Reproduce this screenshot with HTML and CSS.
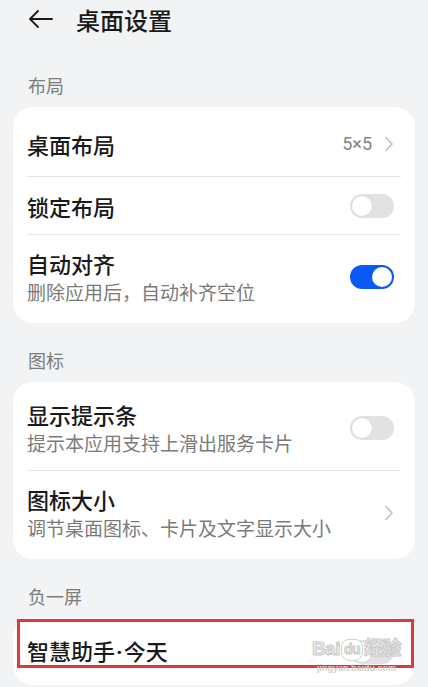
FILE: index.html
```html
<!DOCTYPE html>
<html lang="zh-CN">
<head>
<meta charset="utf-8">
<title>桌面设置</title>
<link rel="stylesheet" href="styles.css">
</head>
<body>
<div class="screen">
  <header class="header">
    <svg class="back" width="25" height="18" viewBox="0 0 25 18" aria-hidden="true">
      <path d="M10 1 L2 9 L10 17 M2 9 H24" fill="none" stroke="#1a1a1a" stroke-width="1.8" stroke-linecap="round" stroke-linejoin="round"/>
    </svg>
    <h1 class="title">桌面设置</h1>
  </header>

  <div class="section-label section-label--first">布局</div>
  <section class="card">
    <div class="row row--value">
      <div class="row-text"><div class="row-title">桌面布局</div></div>
      <div class="row-end">
        <span class="row-value">5×5</span>
        <svg class="chevron" width="10" height="16" viewBox="0 0 10 16" aria-hidden="true"><path d="M2 1.5 L8 8 L2 14.5" fill="none" stroke="#c4c4c4" stroke-width="1.8" stroke-linecap="round" stroke-linejoin="round"/></svg>
      </div>
    </div>
    <div class="row">
      <div class="row-text"><div class="row-title">锁定布局</div></div>
      <div class="row-end"><span class="toggle"><span class="knob"></span></span></div>
    </div>
    <div class="row row--double">
      <div class="row-text">
        <div class="row-title">自动对齐</div>
        <div class="row-sub">删除应用后，自动补齐空位</div>
      </div>
      <div class="row-end"><span class="toggle toggle--on"><span class="knob"></span></span></div>
    </div>
  </section>

  <div class="section-label">图标</div>
  <section class="card">
    <div class="row row--double">
      <div class="row-text">
        <div class="row-title">显示提示条</div>
        <div class="row-sub">提示本应用支持上滑出服务卡片</div>
      </div>
      <div class="row-end"><span class="toggle"><span class="knob"></span></span></div>
    </div>
    <div class="row row--double">
      <div class="row-text">
        <div class="row-title">图标大小</div>
        <div class="row-sub">调节桌面图标、卡片及文字显示大小</div>
      </div>
      <div class="row-end">
        <svg class="chevron" width="10" height="16" viewBox="0 0 10 16" aria-hidden="true"><path d="M2 1.5 L8 8 L2 14.5" fill="none" stroke="#c4c4c4" stroke-width="1.8" stroke-linecap="round" stroke-linejoin="round"/></svg>
      </div>
    </div>
  </section>

  <div class="section-label">负一屏</div>
  <section class="card">
    <div class="row row--last">
      <div class="row-text"><div class="row-title">智慧助手<span class="dot">·</span>今天</div></div>
      <div class="row-end"><span class="toggle"><span class="knob"></span></span></div>
    </div>
  </section>

  <div class="highlight"></div>
  <div class="watermark">
    <div class="wm-logo"><span>Bai</span><span class="wm-du">du</span><span>经验</span></div>
    <div class="wm-url">jingyan.baidu.com</div>
  </div>
</div>
</body>
</html>
```

FILE: styles.css
```css
* { box-sizing: content-box; }
html, body {
  margin: 0;
  padding: 0;
  background: #f1f3f5;
}
body {
  font-family: "Noto Sans CJK SC", "Noto Sans", sans-serif;
  color: #1a1a1a;
}
.screen {
  position: relative;
  width: 428px;
  height: 687px;
  overflow: hidden;
}
.header {
  height: 38px;
  display: flex;
  align-items: center;
  gap: 23px;
  padding-left: 28px;
}
.back { display: block; }
.title {
  margin: 0;
  font-size: 24px;
  font-weight: 500;
  line-height: 37px;
  color: #1a1a1a;
}
.section-label {
  margin: 25px 0 10px 28px;
  font-size: 18px;
  line-height: 24px;
  color: #7d7d7d;
}
.section-label--first { margin-top: 35px; }
.card {
  margin: 0 13px;
  background: #ffffff;
  border-radius: 20px;
  padding: 4px 0;
}
.row {
  margin: 0 14px;
  padding-right: 7px;
  height: 57px;
  display: flex;
  align-items: center;
  justify-content: space-between;
  border-bottom: 1px solid #e6e6e6;
}
.card .row:last-child { border-bottom: none; }
.row--value { height: 65px; }
.row--double { height: 84px; }
.row--last { height: 59px; }
.row-text {
  display: flex;
  flex-direction: column;
  gap: 2px;
}
.row-title {
  font-size: 22px;
  line-height: 28px;
  font-weight: 500;
  color: #1a1a1a;
}
.dot {
  font-family: "Roboto", "Noto Sans", sans-serif;
  font-weight: 700;
  margin: 0 1px;
}
.row-sub {
  font-size: 19px;
  line-height: 26px;
  color: #7a7a7a;
}
.row-end {
  display: flex;
  align-items: center;
  gap: 12px;
}
.row-value {
  font-family: "Roboto", "Noto Sans", sans-serif;
  font-size: 18px;
  color: #858585;
}
.chevron { display: block; }
.toggle {
  position: relative;
  display: block;
  width: 44px;
  height: 24px;
  border-radius: 12px;
  background: #e2e2e2;
}
.knob {
  position: absolute;
  top: 2px;
  left: 2px;
  width: 20px;
  height: 20px;
  border-radius: 50%;
  background: #ffffff;
  box-shadow: 0 0 0 1px #dcdcdc;
}
.toggle--on { background: #0a59f7; }
.toggle--on .knob {
  left: 22px;
  box-shadow: none;
}
.highlight {
  position: absolute;
  left: 17px;
  top: 619px;
  width: 391px;
  height: 43px;
  border: 3px solid #e0383e;
}
.watermark {
  position: absolute;
  left: 309px;
  top: 637px;
  width: 95px;
  text-align: center;
  color: #d9d9d9;
}
.wm-logo {
  font-family: "Liberation Sans", "Noto Sans CJK SC", sans-serif;
  font-size: 19px;
  line-height: 24px;
  font-weight: 700;
  letter-spacing: -0.5px;
  color: #eeeeee;
  -webkit-text-stroke: 1px #c9c9c9;
  display: flex;
  justify-content: center;
  gap: 1px;
}
.wm-du {
  display: inline-block;
  font-size: 14px;
  line-height: 18px;
  margin-top: 2px;
  padding: 0 2px;
  border: 1px solid #d0d0d0;
  border-radius: 8px 8px 9px 9px;
  background: #ffffff;
}
.wm-url {
  font-family: "Liberation Sans", sans-serif;
  font-size: 9px;
  line-height: 11px;
  font-weight: 700;
  color: #cfcfcf;
  margin-top: 2px;
}
```
